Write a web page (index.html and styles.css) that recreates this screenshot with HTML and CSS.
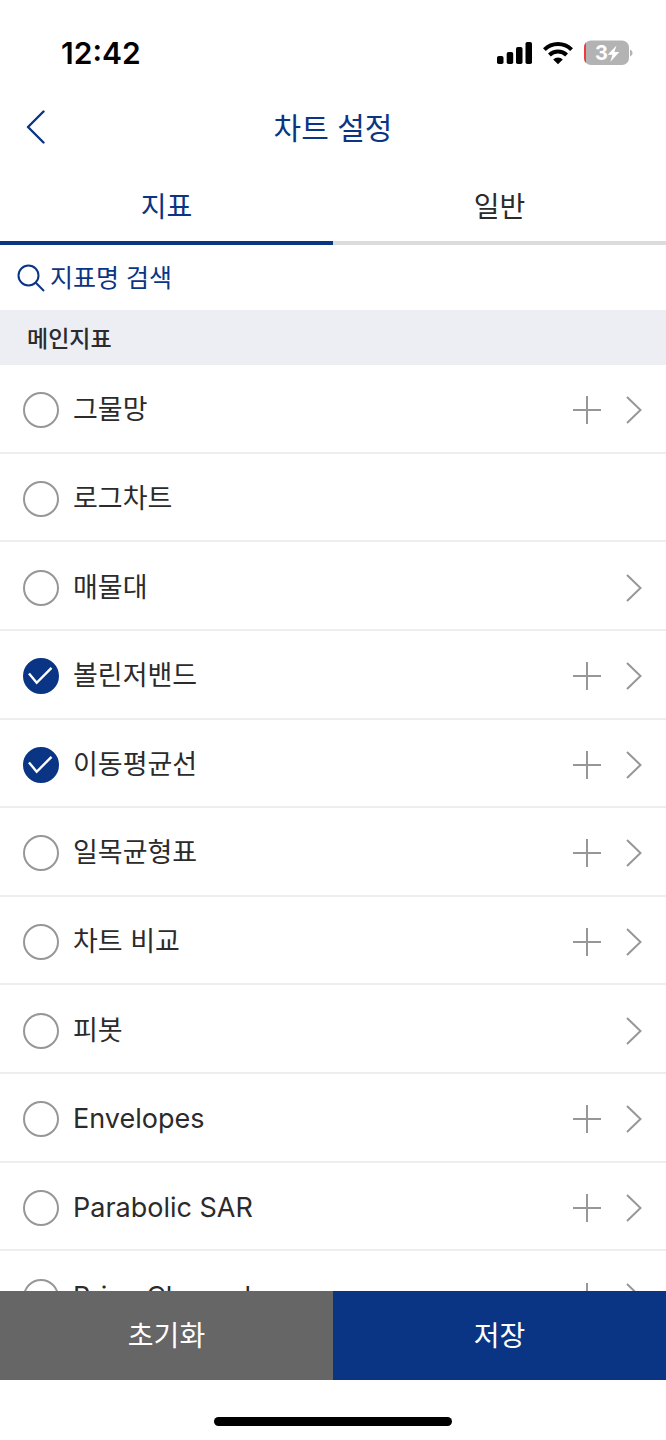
FILE: index.html
```html
<!DOCTYPE html>
<html lang="ko">
<head>
    <meta charset="UTF-8" />
    <meta name="viewport" content="width=device-width, initial-scale=1.0" />
    <title>차트 설정</title>
    <link rel="stylesheet" href="styles.css">
</head>

<body>
    <!-- Shared icons -->
    <svg class="sprite" aria-hidden="true">
        <symbol id="check" viewBox="0 0 36 36"><path d="M6 15.5 L13.7 24.8 L28.5 9.8" /></symbol>
        <symbol id="plus" viewBox="0 0 28 28"><path d="M14 0 V28 M0 14 H28" /></symbol>
        <symbol id="chevron" viewBox="0 0 16 28"><path d="M1 1 L14.5 14 L1 27" /></symbol>
    </svg>

    <div class="status-bar">
        <span class="time">12:42</span>
        <div class="status-icons">
            <svg width="36" height="24" viewBox="0 0 36 24">
                <rect x="0" y="15" width="6.5" height="8" rx="1.8" />
                <rect x="9.7" y="11" width="6.5" height="12" rx="1.8" />
                <rect x="19" y="6" width="6.5" height="17" rx="1.8" />
                <rect x="28.5" y="1" width="6.5" height="22" rx="1.8" />
            </svg>
            <svg width="30" height="24" viewBox="0 0 30 24">
                <g fill="none" stroke="#000" stroke-width="4">
                    <path d="M1.4 8.6 A19.5 19.5 0 0 1 28.6 8.6" />
                    <path d="M6.4 14 A12.4 12.4 0 0 1 23.6 14" />
                </g>
                <path d="M15 23.2 L10.2 18.4 A6.8 6.8 0 0 1 19.8 18.4 Z" />
            </svg>
            <svg width="50" height="26" viewBox="0 0 50 26">
                <clipPath id="battery"><rect x="1" y="0.5" width="45" height="24.5" rx="7" /></clipPath>
                <g clip-path="url(#battery)">
                    <rect x="1" y="0" width="45" height="26" fill="#b3b3b3" />
                    <rect x="1" y="0" width="2" height="26" fill="#f03a3a" />
                </g>
                <path d="M47 9.5 Q49.6 10.5 49.6 13 Q49.6 15.5 47 16.5 Z" fill="#b3b3b3" />
                <text class="battery-level" x="12" y="20">3</text>
                <path d="M33.5 5.5 L24.6 14.8 H29.4 L27.4 21.8 L36.4 12 H31.4 Z" fill="#fff" />
            </svg>
        </div>
    </div>

    <header class="header">
        <button class="back" aria-label="뒤로">
            <svg width="20" height="34" viewBox="0 0 20 34"><path d="M17.5 1.5 L2 17 L17.5 32.5" /></svg>
        </button>
        <h1>차트 설정</h1>
    </header>

    <nav class="tabs">
        <button class="tab active">지표</button>
        <button class="tab">일반</button>
    </nav>

    <label class="search">
        <svg width="28" height="28" viewBox="0 0 28 28"><circle cx="11.5" cy="11.5" r="10" /><path d="M18.8 18.8 L27 27" /></svg>
        <input type="text" placeholder="지표명 검색" aria-label="지표명 검색" />
    </label>

    <h2 class="section-title">메인지표</h2>

    <main class="list-wrap">
        <ul class="list">
            <li class="row">
                <label class="item"><span class="box"><input type="checkbox" /><svg><use href="#check" /></svg></span>그물망</label>
                <button class="add" aria-label="추가"><svg><use href="#plus" /></svg></button>
                <button class="more" aria-label="설정"><svg><use href="#chevron" /></svg></button>
            </li>
            <li class="row">
                <label class="item"><span class="box"><input type="checkbox" /><svg><use href="#check" /></svg></span>로그차트</label>
            </li>
            <li class="row">
                <label class="item"><span class="box"><input type="checkbox" /><svg><use href="#check" /></svg></span>매물대</label>
                <button class="more" aria-label="설정"><svg><use href="#chevron" /></svg></button>
            </li>
            <li class="row">
                <label class="item"><span class="box"><input type="checkbox" checked /><svg><use href="#check" /></svg></span>볼린저밴드</label>
                <button class="add" aria-label="추가"><svg><use href="#plus" /></svg></button>
                <button class="more" aria-label="설정"><svg><use href="#chevron" /></svg></button>
            </li>
            <li class="row">
                <label class="item"><span class="box"><input type="checkbox" checked /><svg><use href="#check" /></svg></span>이동평균선</label>
                <button class="add" aria-label="추가"><svg><use href="#plus" /></svg></button>
                <button class="more" aria-label="설정"><svg><use href="#chevron" /></svg></button>
            </li>
            <li class="row">
                <label class="item"><span class="box"><input type="checkbox" /><svg><use href="#check" /></svg></span>일목균형표</label>
                <button class="add" aria-label="추가"><svg><use href="#plus" /></svg></button>
                <button class="more" aria-label="설정"><svg><use href="#chevron" /></svg></button>
            </li>
            <li class="row">
                <label class="item"><span class="box"><input type="checkbox" /><svg><use href="#check" /></svg></span>차트 비교</label>
                <button class="add" aria-label="추가"><svg><use href="#plus" /></svg></button>
                <button class="more" aria-label="설정"><svg><use href="#chevron" /></svg></button>
            </li>
            <li class="row">
                <label class="item"><span class="box"><input type="checkbox" /><svg><use href="#check" /></svg></span>피봇</label>
                <button class="more" aria-label="설정"><svg><use href="#chevron" /></svg></button>
            </li>
            <li class="row">
                <label class="item"><span class="box"><input type="checkbox" /><svg><use href="#check" /></svg></span>Envelopes</label>
                <button class="add" aria-label="추가"><svg><use href="#plus" /></svg></button>
                <button class="more" aria-label="설정"><svg><use href="#chevron" /></svg></button>
            </li>
            <li class="row">
                <label class="item"><span class="box"><input type="checkbox" /><svg><use href="#check" /></svg></span>Parabolic SAR</label>
                <button class="add" aria-label="추가"><svg><use href="#plus" /></svg></button>
                <button class="more" aria-label="설정"><svg><use href="#chevron" /></svg></button>
            </li>
            <li class="row">
                <label class="item"><span class="box"><input type="checkbox" /><svg><use href="#check" /></svg></span>Price Channel</label>
                <button class="add" aria-label="추가"><svg><use href="#plus" /></svg></button>
                <button class="more" aria-label="설정"><svg><use href="#chevron" /></svg></button>
            </li>
        </ul>
    </main>

    <footer class="actions">
        <button class="reset">초기화</button>
        <button class="save">저장</button>
    </footer>

    <div class="home-area"><div class="home-bar"></div></div>
</body>
</html>
```
FILE: styles.css
```css
* {
    box-sizing: border-box;
}

body {
    margin: 0;
    height: 100vh;
    display: flex;
    flex-direction: column;
    background: #fff;
    color: #2b2b2b;
    font-family: Inter, "Noto Sans CJK KR", sans-serif;
    font-size: 27px;
    line-height: 40px;
}

button {
    margin: 0;
    padding: 0;
    border: none;
    background: none;
    color: inherit;
    font: inherit;
    cursor: pointer;
}

svg {
    display: block;
    flex: none;
}

.sprite {
    display: none;
}

/* Status bar */
.status-bar {
    flex: none;
    height: 84px;
    padding: 22px 33px 0 61px;
    display: flex;
    align-items: flex-start;
    justify-content: space-between;
}

.time {
    color: #000;
    font-size: 30px;
    font-weight: 600;
    line-height: 62px;
}

.status-icons {
    display: flex;
    align-items: center;
    gap: 10px;
    height: 62px;
}

.battery-level {
    fill: #fff;
    font-size: 20px;
    font-weight: 700;
}

/* Header */
.header {
    flex: none;
    height: 86px;
    padding: 0 26px;
    display: grid;
    grid-template-columns: 20px 1fr 20px;
    align-items: center;
    color: #0a3584;
}

.header h1 {
    margin: 0;
    padding-top: 2px;
    font-size: 30px;
    font-weight: 400;
    text-align: center;
}

.back path {
    fill: none;
    stroke: #0a3584;
    stroke-width: 2.4;
    stroke-linecap: round;
    stroke-linejoin: round;
}

.tabs {
    flex: none;
    height: 75px;
    display: flex;
}

.tab {
    flex: 1;
    padding-top: 2px;
    border-bottom: 4px solid #dcdcdc;
    font-size: 28px;
}

.tab.active {
    color: #0a3584;
    border-color: #0a3584;
}

.search {
    flex: none;
    height: 65px;
    padding: 0 17px;
    display: flex;
    align-items: center;
    gap: 5px;
}

.search svg {
    fill: none;
    stroke: #0a3584;
    stroke-width: 2;
}

.search input {
    flex: 1;
    min-width: 0;
    padding: 0;
    border: none;
    outline: none;
    background: none;
    color: #0a3584;
    font: inherit;
    font-size: 25px;
}

.search input::placeholder {
    color: #0a3584;
    opacity: 1;
}

.section-title {
    flex: none;
    margin: 0;
    padding: 9px 27px 6px;
    background: #edeef4;
    font-size: 23px;
    font-weight: 500;
    line-height: 40px;
}

/* Indicator list */
.list-wrap {
    flex: 1;
    min-height: 0;
    overflow-y: auto;
    scrollbar-width: none;
}

.list {
    margin: 0;
    padding: 0;
    min-height: 975px;
    display: grid;
    grid-auto-rows: 1fr;
    list-style: none;
}

.row {
    padding: 4px 24px 0 23px;
    display: flex;
    align-items: center;
    border-bottom: 2px solid #eeeeee;
}

.item {
    flex: 1;
    display: flex;
    align-items: center;
    gap: 14px;
}

.box {
    display: grid;
    width: 36px;
    height: 36px;
}

.box input,
.box svg {
    grid-area: 1 / 1;
    width: 36px;
    height: 36px;
    margin: 0;
}

.box input {
    appearance: none;
    border: 2px solid #979797;
    border-radius: 50%;
    background: #fff;
}

.box input:checked {
    border-color: #0a3584;
    background: #0a3584;
}

.box svg {
    visibility: hidden;
    fill: none;
    stroke: #fff;
    stroke-width: 2.4;
    pointer-events: none;
}

.box input:checked + svg {
    visibility: visible;
}

.add svg,
.more svg {
    width: 28px;
    height: 28px;
    fill: none;
    stroke: #979797;
    stroke-width: 2;
}

.more {
    margin-left: 25px;
}

.more svg {
    width: 16px;
}

/* Bottom buttons */
.actions {
    flex: none;
    height: 89px;
    display: flex;
    color: #fff;
    font-size: 28px;
}

.actions button {
    flex: 1;
}

.reset {
    background: #666666;
}

.save {
    background: #0a3584;
}

.home-area {
    flex: none;
    height: 60px;
    padding-top: 22px;
    display: flex;
    align-items: center;
    justify-content: center;
}

.home-bar {
    width: 238px;
    height: 9px;
    border-radius: 5px;
    background: #000;
}
```
